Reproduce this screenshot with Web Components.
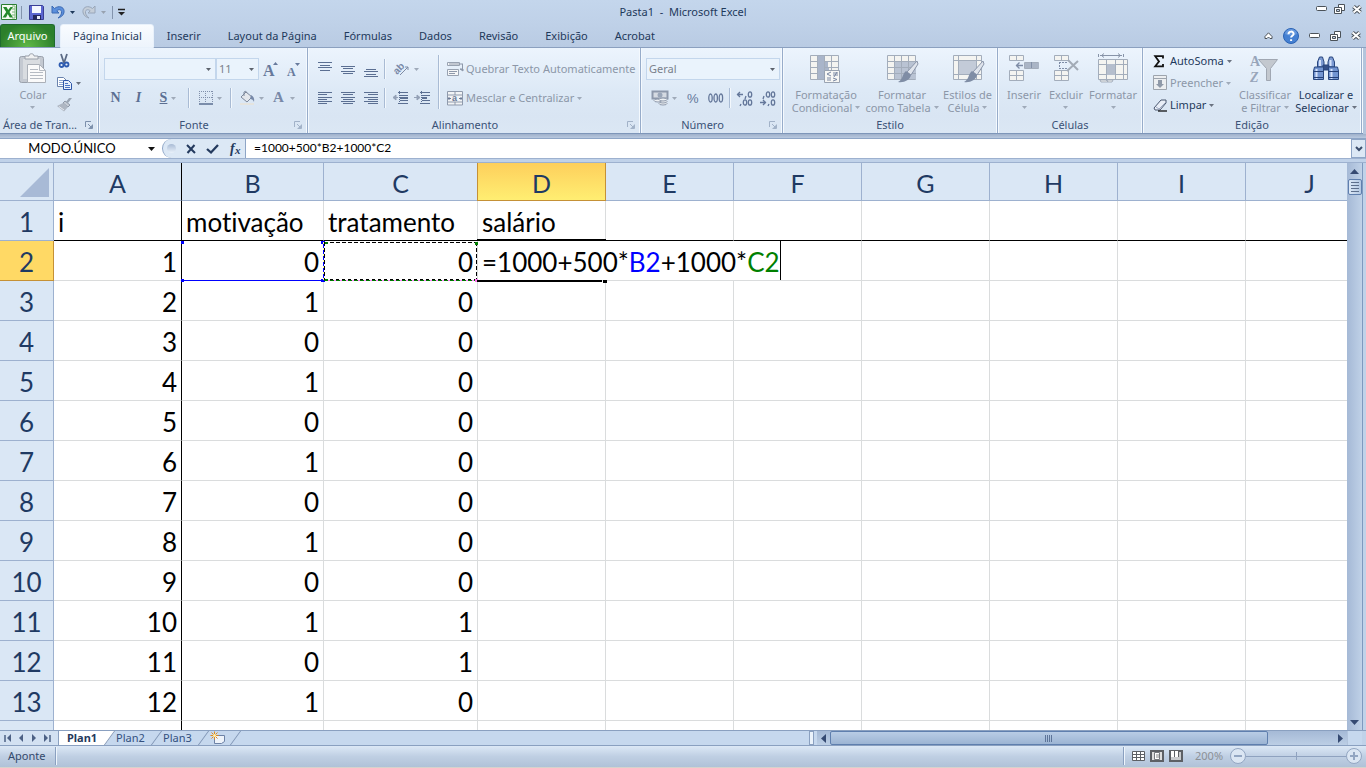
<!DOCTYPE html>
<html lang="pt-BR">
<head>
<meta charset="utf-8">
<title>Pasta1 - Microsoft Excel</title>
<style>
html,body{margin:0;height:100%}
body{font:11px/13px "Noto Sans","Open Sans",sans-serif;color:#1e395b;background:#c0d2e9;overflow:hidden}
</style>
</head>
<body>
<xl-app></xl-app>
<script>
const define = (name, html, setup) => {
  const template = document.createElement('template');
  template.innerHTML = '<style>*{box-sizing:border-box}button,input,select{font:inherit;color:inherit;margin:0;padding:0;border:0;background:none;border-radius:0;outline:0}[hidden]{display:none}</style>' + html;
  customElements.define(name, class extends HTMLElement {
    constructor() {
      super();
      this.attachShadow({mode: 'open'}).append(template.content.cloneNode(true));
    }
    connectedCallback() { if (setup) setup(this, this.shadowRoot); }
  });
};

/* ---------- icons: [width, height, markup] ---------- */
const lines = (ys, xs) => ys.map((y, i) => `<path d="M${xs[i % xs.length][0]} ${y}h${xs[i % xs.length][1]}" stroke="#5b6f92"/>`).join('');
const restore = '<g fill="#fff" stroke="#4b5259"><path d="M4.5.5h6v6h-6z"/><path d="M.5 3.5h7v6h-7z"/><path d="M2.5 5.5h3v2h-3z" fill="#c1d2e8"/></g>';
const cross = '<path d="M1.5 1.5l7 6M8.5 1.5l-7 6" stroke="#4b5259" stroke-width="4"/><path d="M1.5 1.5l7 6M8.5 1.5l-7 6" stroke="#fff" stroke-width="2"/>';
const brush = '<path d="M31 8l-10 11 4 3 7-11z" fill="#dfe4ec" stroke="#8b96aa"/><path d="M20 18l5 4c-1 5-7 8-13 7 5-2 4-8 8-11z" fill="#7f8da5"/>';
const grid = (x, y, c, r, w, h) => {
  let d = `<path d="M${x} ${y}h${c*w}v${r*h}h${-c*w}z" fill="#f4f4f1" stroke="#a3adbb"/>`;
  for (let i = 1; i < c; i++) d += `<path d="M${x+i*w} ${y}v${r*h}" stroke="#a3adbb"/>`;
  for (let i = 1; i < r; i++) d += `<path d="M${x} ${y+i*h}h${c*w}" stroke="#a3adbb"/>`;
  return d;
};
const icons = {
  excel: [16,16,'<path d="M.5.5h15v15H.5z" fill="#f5fbf3" stroke="#2b7d32"/><path d="M11 2h3v12h-3" fill="none" stroke="#7fb77c"/><path d="M11 5h3M11 8h3M11 11h3" stroke="#7fb77c"/><path d="M2 3h3.500l1.700 3L9.500 3H12L8.500 8l3.500 5.500H8.700L6.800 10 5 13.500H1.500L5.200 8z" fill="#24892c"/>'],
  save: [15,15,'<path d="M.5 .5h13l1 1v13H.5z" fill="#5b66d0" stroke="#3a3f96"/><path d="M3 1h9v7H3z" fill="#f4f7ff"/><path d="M4 10h8v5H4z" fill="#24285e"/><path d="M8 11h3v3H8z" fill="#e8ebfa"/>'],
  undo: [14,14,'<path d="M1 1v7h7L5.800 5.800C8 4 10 4.500 10.500 6.500S9.500 11 7 13c4-1 6.500-4 6-7.500S8 0 3.500 3.500z" fill="#5b8fdc" stroke="#3c6ab3" stroke-width="1"/>'],
  redo: [14,14,'<path d="M13 1v7H6l2.200-2.200C6 4 4 4.500 3.500 6.500S4.500 11 7 13C3 12 .5 9 1 5.500S6 0 10.500 3.500z" fill="#c5ced9" stroke="#98a6b9" stroke-width="1"/>'],
  qat: [7,7,'<path d="M0 .5h7" stroke="#222" stroke-width="1.500"/><path d="M0 3h7L3.500 6.500z" fill="#222"/>'],
  tri: [5,3,'<path d="M0 0h5L2.500 3z" fill="currentColor"/>'],
  tri7: [7,4,'<path d="M0 0h7L3.500 4z" fill="#111"/>'],
  min: [11,6,'<rect x=".5" y=".5" width="10" height="4" rx="1" fill="#fff" stroke="#4b5259"/>'],
  restore: [11,10,restore],
  close: [10,9,cross],
  up: [9,7,'<path d="M4.500.8L8 4.500v2H6L4.500 5 3 6.500H1v-2z" fill="#fff" stroke="#4b5259"/>'],
  help: [16,16,'<circle cx="8" cy="8" r="7.500" fill="#4580d2" stroke="#2a62b4"/><path d="M2 6a6 5 0 0 1 12 0q-6 3-12 0" fill="#7aa6e4" opacity=".6"/><path d="M5.500 6.200C5.500 2.800 10.800 2.800 10.600 6c-.1 1.800-2.500 1.800-2.500 3.600M8.100 11.200v1.800" stroke="#fff" stroke-width="2" fill="none"/>'],
  paste: [32,32,'<rect x="2.500" y="3.500" width="24" height="26" rx="2" fill="#c4c9d1" stroke="#9aa1ac"/><path d="M6 6h17v20H6z" fill="#d9dce0"/><path d="M8 6V3h4c0-3 5-3 5 0h4v3z" fill="#f0f1f2" stroke="#989ea8"/><path d="M10.500 11.500h12l6 6v12h-18z" fill="#fafafa" stroke="#abb0b8"/><path d="M22.500 11.500v6h6M13 16.500h8M13 19.500h13M13 22.500h13M13 25.500h13" fill="none" stroke="#b5bac2"/>'],
  cut: [16,14,'<path d="M4 0l3 9M10 0L7 9" stroke="#5c6b85" stroke-width="1.800"/><circle cx="4.500" cy="11" r="2" fill="none" stroke="#2e5bb0" stroke-width="1.800"/><circle cx="9.500" cy="10.500" r="2" fill="none" stroke="#2e5bb0" stroke-width="1.800"/>'],
  copy: [16,13,'<path d="M.5.5h6l3 3v6h-9z" fill="#fff" stroke="#6a83ad"/><path d="M2 3.500h4M2 5.500h4M2 7.500h4" stroke="#8aa5d2"/><path d="M6.500 3.500h5l3 3v6h-8z" fill="#e6effc" stroke="#2f57a8"/><path d="M8 6.500h3M8 8.500h5M8 10.500h5" stroke="#4c75c4"/>'],
  painter: [16,14,'<path d="M15 0l-4 5-2-1 3-4z" fill="#9aa4b2"/><path d="M8 3l5 4-2 2-5-4z" fill="#c6ccd5" stroke="#8f99a8"/><path d="M6 5l5 4-4 4.500L0 8z" fill="#aeb6c2"/><path d="M2 8.500l5 3.500" stroke="#e6eaf0"/>'],
  grow: [15,16,'<text x="0" y="15" font-family="Liberation Serif" font-weight="bold" font-size="16" fill="#687a9c">A</text><path d="M10 4h5l-2.500-3z" fill="#687a9c"/>'],
  shrink: [13,16,'<text x="0" y="15" font-family="Liberation Serif" font-weight="bold" font-size="12" fill="#687a9c">A</text><path d="M8 2h5l-2.500 3z" fill="#687a9c"/>'],
  borders: [14,14,'<path d="M0 .5h14M0 6.500h14M.5 0v12M6.500 0v12M13.500 0v12" stroke="#8190ab" stroke-dasharray="1 1"/><path d="M0 13h14" stroke="#5b6f92" stroke-width="1.500"/>'],
  bucket: [15,14,'<path d="M1 6l5-5 6 5-5 5z" fill="#e4e7ec" stroke="#7d889b"/><path d="M4 5V1q2-2 3 1" fill="none" stroke="#7d889b"/><path d="M11 4q4 2 3 7-1-3-4-3z" fill="#7688a8"/><path d="M0 13h14" stroke="#e5e4df" stroke-width="2"/>'],
  fontcolor: [13,14,'<text x="0" y="11" font-family="Liberation Serif" font-weight="bold" font-size="15" fill="#7889a8">A</text>'],
  atop: [14,15,lines([.5,3.5,5.5,8.5],[[0,14],[2,10]])],
  amid: [14,15,lines([4.5,6.5,9.5,11.5],[[0,14],[2,10]])],
  abot: [14,15,lines([7.5,9.5,12.5,14.5],[[2,10],[0,14]])],
  left: [14,12,lines([.5,2.5,5.5,7.5,9.5,11.5],[[0,14],[0,9]])],
  center: [14,12,lines([.5,2.5,5.5,7.5,9.5,11.5],[[0,14],[2,10]])],
  right: [14,12,lines([.5,2.5,5.5,7.5,9.5,11.5],[[0,14],[4,10]])],
  orient: [16,14,'<text x="0" y="10" transform="rotate(-45 5 8)" font-family="Liberation Sans" font-weight="bold" font-size="10" fill="#7889a8">ab</text><path d="M6 13l8-8M11 5h3v3" fill="none" stroke="#7d8ba5"/>'],
  outdent: [16,14,'<path d="M6 1.500h10M8 4.500h8M8 9.500h8M6 12.500h10" stroke="#5b6f92"/><path d="M8 6h8v2H8z" fill="#5b6f92"/><path d="M7.500 0v14" stroke="#5b6f92" stroke-dasharray="1 1"/><path d="M6 6.500H2M4 4L1 6.500 4 9z" fill="#93a0b6" stroke="#93a0b6"/>'],
  indent: [16,14,'<path d="M6 1.500h10M8 4.500h8M8 9.500h8M6 12.500h10" stroke="#5b6f92"/><path d="M8 6h5v2H8z" fill="#5b6f92"/><path d="M7.500 0v14" stroke="#5b6f92" stroke-dasharray="1 1"/><path d="M0 6.500h4M3 4l3 2.500L3 9z" fill="#93a0b6" stroke="#93a0b6"/>'],
  wrap: [16,16,'<path d="M.5 1.500h12v3H.5zM.5 8.500h11v6H.5z" fill="#f5f6f7" stroke="#98a2b1"/><path d="M2 3h14M2 10.500h8M2 12.500h6" stroke="#8d98aa"/><path d="M15.500 3v6M13 8h3v2z" stroke="#8d98aa" fill="#8d98aa"/>'],
  merge: [16,15,'<path d="M.5.500h15v13.500H.5z" fill="#f2f4f6" stroke="#8f9aac"/><path d="M0 4h16M0 11h16M8 0v4M8 11v3" stroke="#8f9aac"/><path d="M1 7.500h3M12 7.500h3M2 6v3M14 6v3" stroke="#6a7a97"/><text x="5" y="10" font-family="Liberation Sans" font-weight="bold" font-size="9" fill="#6a7a97">a</text>'],
  money: [16,16,'<path d="M.5 1.500h15v7H.5z" fill="#d5dae2" stroke="#8d98ab" stroke-width="2"/><circle cx="8" cy="5" r="2.500" fill="#9aa6b9"/><g fill="#edf0f3" stroke="#8f9aac"><ellipse cx="11" cy="13.500" rx="4" ry="1.500"/><ellipse cx="11" cy="11.500" rx="4" ry="1.500"/><ellipse cx="6" cy="10.500" rx="4" ry="1.500"/><ellipse cx="11" cy="9.500" rx="4" ry="1.500"/></g>'],
  percent: [13,14,'<text x="0" y="12" font-family="Liberation Sans" font-size="13" fill="#64779a">%</text>'],
  thousand: [16,14,'<g fill="none" stroke="#64779a" stroke-width="1.300"><ellipse cx="2.500" cy="7" rx="1.700" ry="4"/><ellipse cx="7.700" cy="7" rx="1.700" ry="4"/><ellipse cx="12.900" cy="7" rx="1.700" ry="4"/></g>'],
  incdec: [16,15,'<g fill="none" stroke="#64779a" stroke-width="1.300"><ellipse cx="13" cy="3.500" rx="1.700" ry="2.700"/><ellipse cx="8" cy="11.500" rx="1.700" ry="2.700"/><ellipse cx="13" cy="11.500" rx="1.700" ry="2.700"/><path d="M9 5l-1 3M4 13l-1 2M0 3.500h6M3 1L.5 3.500 3 6"/></g>'],
  decdec: [16,15,'<g fill="none" stroke="#64779a" stroke-width="1.300"><ellipse cx="8" cy="3.500" rx="1.700" ry="2.700"/><ellipse cx="13" cy="3.500" rx="1.700" ry="2.700"/><ellipse cx="13" cy="11.500" rx="1.700" ry="2.700"/><path d="M4 5L3 8M9 13l-1 2M0 11.500h6M3 9l2.500 2.500L3 14"/></g>'],
  cond: [32,32,grid(.5,2.5,4,4,7,6)+'<path d="M8 3h6v23H8zM15 9h3v5h-3zM15 15h4v5h-4z" fill="#a9b5ca"/><path d="M14.500 17.500h15v12h-15z" fill="#f7f7f5" stroke="#99a3b2"/><path d="M21 19l-4 2 4 2M17 25h4M23 20h5M23 22h5M27 19l-3 5M23 25l4 1.500-4 1.500M17 27h4" fill="none" stroke="#7a88a3"/>'],
  table: [32,32,grid(1.5,2.5,4,4,7,6)+'<path d="M9 9h21v17H9z" fill="#b9c3d3"/><path d="M15.500 9v17M22.500 9v17M9 14.500h21M9 20.500h21" stroke="#a3adbb"/>'+brush],
  styles: [32,32,grid(1.5,2.5,1,1,28,24)+'<path d="M6.500 2v25M24.500 2v25M1 7.500h29M1 21.500h29" stroke="#a3adbb"/><path d="M7 8h17v13H7z" fill="#c3cbd8"/>'+brush],
  insert: [32,32,grid(1.5,2.5,2,1,7,5)+grid(1.5,17.5,2,2,7,5)+grid(16.5,9.5,2,1,7,6)+'<path d="M17 10h14v5H17z" fill="#aab5c6"/><path d="M23.500 9v6" stroke="#8290a8"/><path d="M8 12.500h7M11.500 9.500l-3 3 3 3" fill="none" stroke="#7e8ca6" stroke-width="1.300"/>'],
  remove: [32,32,grid(4.5,2.5,2,1,7,5)+grid(4.5,17.5,2,2,7,5)+'<path d="M9 9.500h9M9 15.500h9M9.500 9v6" stroke="#7e8ca6" stroke-dasharray="2 1"/><path d="M18 7l10 10M28 8L17 18" stroke="#a3abb6" stroke-width="2"/>'],
  format: [32,32,'<path d="M1.500 1v3M26.500 1v3M3 2.500h22M7 .5L4.500 2.500 7 4.500M21 .5l2.500 2-2.500 2" fill="none" stroke="#8793a8"/>'+grid(1.5,6.5,1,1,29,20)+'<path d="M9.500 6v21M18.500 6v21M26.500 6v21M1 11.500h29M1 21.500h29" stroke="#a3adbb"/><path d="M10 11h8v11h-8z" fill="#b5becd"/><path d="M3 27h6l2 2H4zM10 27h6l-1 2h-4z" fill="#f5f5f2" stroke="#a3adbb"/>'],
  sigma: [14,13,'<path d="M10 3.500V1.200H2.200L6 6.500 2.200 11.300H10V9" fill="none" stroke="#111" stroke-width="1.800"/>'],
  fill: [14,16,'<path d="M.5.5h13v14H.5z" fill="#eceef0" stroke="#9da4ad"/><path d="M1 3.500h12" stroke="#9da4ad"/><path d="M5 5h4v4h2l-4 4-4-4h2z" fill="#8f99a8"/>'],
  clear: [14,13,'<path d="M1 9l7-8h5v3l-6 7H2z" fill="#e9eef7" stroke="#49566e"/><path d="M3 8l3 2 6-6" fill="none" stroke="#9eabc4"/><path d="M5 12h9" stroke="#111" stroke-width="1.300"/>'],
  sort: [32,32,'<text x="1" y="13" font-family="Liberation Serif" font-weight="bold" font-size="14" fill="#98a5ba">A</text><text x="1" y="29" font-family="Liberation Serif" font-style="italic" font-weight="bold" font-size="14" fill="#98a5ba">Z</text><path d="M9.500 6.500h19l-7 9v12h-4v-12z" fill="#c3c8cf" stroke="#a0a7b2"/>'],
  find: [32,32,'<g stroke="#29477f"><path d="M9.500 4h3l1.500 5v5H7.500V9zM19.500 4h3l2 5v5H18V9z" fill="#7c9ad2"/><path d="M13 12h6v5h-6z" fill="#344f87"/><path d="M4.500 14h9v12.500h-10V18z" fill="#7395d1"/><path d="M18.500 14h9l1 4v8.500h-10z" fill="#7395d1"/></g><path d="M6.500 16v10M21.500 16v10M10 7v6M20.500 7v6" stroke="#d5e2fa" stroke-width="2"/><path d="M4 24.500h9M19 24.500h9M4 18.500h9M19 18.500h9" stroke="#253f74"/>'],
  launch: [8,8,'<path d="M.5 6V.5H6" fill="none" stroke="#7d90ac"/><path d="M3 3l3 3M7.500 3.500v4h-4" fill="none" stroke="#7d90ac"/><path d="M7 4v3H4z" fill="#7d90ac"/>'],
  cancel: [10,10,'<path d="M1 1l8 8M8.500 1L1.500 9" stroke="#243a5e" stroke-width="2"/>'],
  ok: [13,10,'<path d="M1 5l4 3.500L12 1" fill="none" stroke="#243a5e" stroke-width="2.300"/>'],
  fx: [12,14,'<text x="1" y="11" font-family="Liberation Serif" font-style="italic" font-weight="bold" font-size="14" fill="#243a5e">f</text><text x="6" y="12" font-family="Liberation Serif" font-style="italic" font-weight="bold" font-size="11" fill="#243a5e">x</text>'],
  chev: [8,6,'<path d="M1 1l3 3 3-3" fill="none" stroke="#3b4d6c" stroke-width="2"/>'],
  corner: [29,29,'<path d="M29 0v29H0z" fill="#a8bad6"/>'],
  first: [8,8,'<path d="M1 1v7" stroke="#4d6185" stroke-width="1.500"/><path d="M7 0v8L3 4z" fill="#4d6185"/>'],
  prev: [8,8,'<path d="M6 0v8L2 4z" fill="#4d6185"/>'],
  next: [8,8,'<path d="M2 0v8l4-4z" fill="#4d6185"/>'],
  last: [8,8,'<path d="M1 0v8l4-4z" fill="#4d6185"/><path d="M7 1v7" stroke="#4d6185" stroke-width="1.500"/>'],
  newsheet: [15,13,'<path d="M4.500 4.500h10v6l-3 2h-7z" fill="#eef3fa" stroke="#6d82a6"/><path d="M4.500.5v8M.5 4.500h8M1.500 1.500l6 6M7.500 1.500l-6 6" stroke="#e08a1e"/><circle cx="4.500" cy="4.500" r="1.500" fill="#fff3b0"/>'],
  sup: [9,5,'<path d="M0 5h9L4.500 0z" fill="#354a72"/>'],
  sdown: [9,5,'<path d="M0 0h9L4.500 5z" fill="#354a72"/>'],
  sleft: [5,9,'<path d="M5 0v9L0 4.500z" fill="#354a72"/>'],
  sright: [5,9,'<path d="M0 0v9l5-4.500z" fill="#354a72"/>'],
  vnormal: [13,10,'<path d="M.5.5h12v9H.5zM.5 3.500h12M.5 6.500h12M4.500.5v9M8.500.5v9" fill="#fff" stroke="#5d6065"/>'],
  vpage: [14,12,'<path d="M1 1h12v10H1z" fill="#ddd" stroke="#5d6065" stroke-width="2"/><path d="M4.500 2.500h5v7h-5z" fill="#fff" stroke="#77797d"/><path d="M6 5h3M6 7h3" stroke="#888"/>'],
  vbreak: [14,12,'<path d="M1 1h12v10H1z" fill="#c9cbce" stroke="#5d6065" stroke-width="2"/><path d="M2 1h3v6H2zM6 1h3v6H6z" fill="#fff"/><path d="M5.500 0v7M9.500 0v7" stroke="#5d6065"/>'],
  minus: [16,16,'<circle cx="8" cy="8" r="7.500" fill="#dbe6f3" stroke="#93a6c2"/><path d="M4 8h8" stroke="#93a6c2" stroke-width="2"/>'],
  plus: [16,16,'<circle cx="8" cy="8" r="7.500" fill="#dbe6f3" stroke="#93a6c2"/><path d="M4 8h8M8 4v8" stroke="#93a6c2" stroke-width="2"/>']
};
define('xl-icon', '<style>:host{display:block;flex:none}svg{display:block;overflow:visible}</style><span id="i"></span>', (el, root) => {
  const [w, h, body] = icons[el.getAttribute('name')];
  root.getElementById('i').innerHTML = `<svg width="${w}" height="${h}" viewBox="0 0 ${w} ${h}" aria-hidden="true">${body}</svg>`;
});

/* ---------- ribbon tool: small (icon + text) or big (icon over two lines) ---------- */
define('xl-tool', `<style>
:host{display:block;flex:none}
button{display:flex;align-items:center;justify-content:center;gap:4px;width:100%;height:22px;white-space:nowrap}
.txt{padding-bottom:2px}
:host([wide]) button{justify-content:flex-start;gap:3px}
:host([big]) button{flex-direction:column;justify-content:flex-start;gap:3px;height:66px;padding-top:3px}
:host([off]) button{color:#8c97a8}
.l{display:block;text-align:center}
.l2{display:flex;align-items:center;justify-content:center;gap:3px;height:13px}
xl-icon.t{color:#6a7280}
:host([off]) xl-icon.t{color:#9faab9}
</style><button type="button"></button>`, (el, root) => {
  const a = n => el.getAttribute(n) || '';
  const arrow = el.hasAttribute('arrow') ? '<xl-icon class="t" name="tri"></xl-icon>' : '';
  const icon = a('icon') ? `<xl-icon name="${a('icon')}"></xl-icon>` : '<slot></slot>';
  const b = root.querySelector('button');
  if (!a('label')) b.setAttribute('aria-label', a('tip') || a('icon'));
  b.innerHTML = el.hasAttribute('big')
    ? `${icon}<span><span class="l">${a('label')}</span><span class="l2">${a('line2')}${arrow}</span></span>`
    : `${icon}${a('label') ? `<span class="txt">${a('label')}</span>` : ''}${arrow}`;
});

define('xl-group', `<style>
:host{display:flex;flex-direction:column;flex:none;height:85px;padding-top:2px;border-right:1px solid #97acca;box-shadow:inset -1px 0 #f4f9fe,1px 0 #f4f9fe}
.body{display:flex;height:66px}
footer{display:flex;align-items:center;height:17px;color:#3b5277}
footer span{flex:1;text-align:center;white-space:nowrap}
button{width:18px;height:14px;display:grid;place-items:center}
:host([launch=off]) button{opacity:.6}
</style><div class="body"><slot></slot></div><footer><span id="t"></span><button type="button" aria-label="Opções"><xl-icon name="launch"></xl-icon></button></footer>`, (el, root) => {
  root.getElementById('t').textContent = el.getAttribute('label');
  root.querySelector('button').hidden = !el.hasAttribute('launch');
});

define('xl-combo', `<style>
:host{display:block;position:relative}
select{appearance:none;width:100%;height:22px;padding:0 2px 1px;border:1px solid #c3d6ec;background:#eaf3fc;color:#7a818b;display:block}
xl-icon{position:absolute;right:5px;top:10px;color:#5c626c;pointer-events:none}
</style><select><option></option></select><xl-icon name="tri"></xl-icon>`, (el, root) => {
  root.querySelector('option').textContent = el.getAttribute('value');
  root.querySelector('select').setAttribute('aria-label', el.getAttribute('label'));
});

define('xl-titlebar', `<style>
:host{display:grid;grid-template-columns:1fr auto 1fr;align-items:center;height:24px;background:linear-gradient(#c4d6ec,#bfd1e8)}
div{display:flex;align-items:center}
button{display:grid;place-items:center}
.quick{padding-left:1px;height:22px}
.quick button{margin-left:7px}
.quick .drop{margin-left:5px}
i{width:1px;height:13px;background:#8394ad;margin-left:4px}
.drop + i{margin-left:6px}
.title{padding-bottom:2px}
.win{justify-content:flex-end;gap:7px;padding:0 4px 6px 0}
xl-icon.d{color:#98a2b0}
</style>
<div class="quick"><xl-icon name="excel"></xl-icon><i></i>
<button type="button" aria-label="Salvar"><xl-icon name="save"></xl-icon></button>
<button type="button" aria-label="Desfazer"><xl-icon name="undo"></xl-icon></button><button class="drop" type="button" aria-label="Lista desfazer"><xl-icon name="tri"></xl-icon></button>
<button type="button" aria-label="Refazer"><xl-icon name="redo"></xl-icon></button><button class="drop" type="button" aria-label="Lista refazer"><xl-icon class="d" name="tri"></xl-icon></button><i></i><button class="drop" type="button" aria-label="Personalizar"><xl-icon name="qat"></xl-icon></button></div>
<span class="title">Pasta1 &nbsp;-&nbsp; Microsoft Excel</span>
<div class="win"><button type="button" aria-label="Minimizar"><xl-icon name="min"></xl-icon></button><button type="button" aria-label="Restaurar"><xl-icon name="restore"></xl-icon></button><button type="button" aria-label="Fechar"><xl-icon name="close"></xl-icon></button></div>`);

define('xl-tabs', `<style>
:host{display:flex;height:24px;background:linear-gradient(#bfd1e8,#b9cbe3);border-bottom:1px solid #8ba0bf}
nav{display:flex;flex:1}
a{display:block;padding:5px 14px 0 13px;height:23px;color:#1e395b;text-decoration:none;white-space:nowrap}
.file{width:55px;margin:0 5px 0 0;padding:5px 0 0;text-align:center;color:#fff;background:radial-gradient(ellipse at 50% 100%,#5fb846,#2c7f2b 75%);border:1px solid #1f6b2d;border-bottom:0;border-radius:3px 3px 0 0;line-height:11px}
.on{background:linear-gradient(#f9fcff,#edf4fc);border:1px solid #e8f1fb;border-radius:3px 3px 0 0;height:24px;margin-bottom:-1px;line-height:11px;padding:5px 11px 0 12px}
div{display:flex;align-items:center;gap:10px;padding-right:5px}
button{display:grid;place-items:center}
</style><nav><a class="file" href="#arquivo">Arquivo</a><a class="on" href="#inicio">Página Inicial</a><a href="#inserir">Inserir</a><a href="#layout">Layout da Página</a><a href="#formulas">Fórmulas</a><a href="#dados">Dados</a><a href="#revisao">Revisão</a><a href="#exibicao">Exibição</a><a href="#acrobat">Acrobat</a></nav>
<div><button type="button" aria-label="Minimizar faixa"><xl-icon name="up"></xl-icon></button><button type="button" aria-label="Ajuda"><xl-icon name="help"></xl-icon></button><button type="button" aria-label="Minimizar pasta"><xl-icon name="min"></xl-icon></button><button type="button" aria-label="Restaurar pasta"><xl-icon name="restore"></xl-icon></button><button type="button" aria-label="Fechar pasta"><xl-icon name="close"></xl-icon></button></div>`);

define('xl-ribbon', `<style>
:host{display:block;background:#b4c5dc}
.bar{display:flex;height:86px;margin-right:3px;background:linear-gradient(#ecf4fd,#dde9f6 50%,#d9e5f3 80%,#dbe7f4);border-bottom:1px solid #7e96b9}
.strip{height:4px;background:linear-gradient(#9fb1cb,#b9c9df)}
.col{display:flex;flex-direction:column}
.row{display:flex;align-items:center;height:22px}
.two{padding-top:8px;gap:7px;display:flex;flex-direction:column}
b,em,u{font:bold 14px/14px "Liberation Serif",serif;color:#5b6f92}
em{font-style:italic}
hr{border:0;width:2px;height:20px;margin:0 2px;background:linear-gradient(90deg,#a9bbd4 50%,#f3f8fd 50%)}
hr.tall{height:54px;margin:5px 7px 0 5px}
.w22{width:22px}.w23{width:23px}.w28{width:28px}.w36{width:36px}
</style>
<div class="bar">
<xl-group label="Área de Tran..." launch style="width:99px">
 <xl-tool big off arrow icon="paste" label="Colar" style="width:38px;margin-left:14px"></xl-tool>
 <div class="col" style="margin-left:5px"><xl-tool wide icon="cut" tip="Recortar"></xl-tool><xl-tool wide arrow icon="copy" tip="Copiar"></xl-tool><xl-tool wide icon="painter" tip="Pincel"></xl-tool></div>
</xl-group>
<xl-group label="Fonte" launch="off" style="width:209px">
 <div class="two" style="padding-left:5px">
  <div class="row"><xl-combo label="Fonte" value="" style="width:112px"></xl-combo><xl-combo label="Tamanho" value="11" style="width:43px"></xl-combo><xl-tool class="w23" icon="grow" tip="Aumentar"></xl-tool><xl-tool class="w23" icon="shrink" tip="Diminuir"></xl-tool></div>
  <div class="row"><xl-tool class="w23" tip="Negrito"><b>N</b></xl-tool><xl-tool class="w23" tip="Itálico"><em>I</em></xl-tool><xl-tool class="w36" off arrow tip="Sublinhado"><u>S</u></xl-tool><hr><xl-tool class="w36" off arrow icon="borders"></xl-tool><hr><xl-tool class="w36" off arrow icon="bucket"></xl-tool><xl-tool class="w28" off arrow icon="fontcolor"></xl-tool></div>
 </div>
</xl-group>
<xl-group label="Alinhamento" launch="off" style="width:333px">
 <div class="two" style="padding-left:5px">
  <div class="row"><xl-tool class="w23" icon="atop"></xl-tool><xl-tool class="w23" icon="amid"></xl-tool><xl-tool class="w23" icon="abot"></xl-tool><hr><xl-tool class="w36" off arrow icon="orient"></xl-tool></div>
  <div class="row"><xl-tool class="w23" icon="left"></xl-tool><xl-tool class="w23" icon="center"></xl-tool><xl-tool class="w23" icon="right"></xl-tool><hr><xl-tool class="w23" icon="outdent"></xl-tool><xl-tool class="w22" icon="indent"></xl-tool></div>
 </div>
 <hr class="tall">
 <div class="two"><xl-tool wide off icon="wrap" label="Quebrar Texto Automaticamente"></xl-tool><xl-tool wide off arrow icon="merge" label="Mesclar e Centralizar"></xl-tool></div>
</xl-group>
<xl-group label="Número" launch="off" style="width:142px">
 <div class="two" style="padding-left:5px">
  <xl-combo label="Formato" value="Geral" style="width:134px"></xl-combo>
  <div class="row"><xl-tool class="w36" off arrow icon="money"></xl-tool><xl-tool class="w22" icon="percent"></xl-tool><xl-tool class="w23" icon="thousand"></xl-tool><hr><xl-tool class="w23" icon="incdec"></xl-tool><xl-tool class="w23" icon="decdec"></xl-tool></div>
 </div>
</xl-group>
<xl-group label="Estilo" style="width:215px">
 <xl-tool big off arrow icon="cond" label="Formatação" line2="Condicional" style="width:72px;margin-left:7px"></xl-tool><xl-tool big off arrow icon="table" label="Formatar" line2="como Tabela" style="width:76px;margin-left:2px"></xl-tool><xl-tool big off arrow icon="styles" label="Estilos de" line2="Célula" style="width:55px"></xl-tool>
</xl-group>
<xl-group label="Células" style="width:145px">
 <xl-tool big off arrow icon="insert" label="Inserir" style="width:42px;margin-left:5px"></xl-tool><xl-tool big off arrow icon="remove" label="Excluir" style="width:42px"></xl-tool><xl-tool big off arrow icon="format" label="Formatar" style="width:52px"></xl-tool>
</xl-group>
<xl-group label="Edição" style="width:219px">
 <div class="col" style="width:84px;margin-left:10px"><xl-tool wide arrow icon="sigma" label="AutoSoma"></xl-tool><xl-tool wide off arrow icon="fill" label="Preencher"></xl-tool><xl-tool wide arrow icon="clear" label="Limpar"></xl-tool></div>
 <xl-tool big off arrow icon="sort" label="Classificar" line2="e Filtrar" style="width:56px"></xl-tool><xl-tool big arrow icon="find" label="Localizar e" line2="Selecionar" style="width:66px"></xl-tool>
</xl-group>
</div><div class="strip"></div>`);

define('xl-formula-bar', `<style>
:host{display:flex;height:21px;background:#fff;border-top:1px solid #8ea5c6;border-bottom:1px solid #9db1cf;font:13px/16px Lato,sans-serif;color:#000}
input{padding-bottom:2px}
.name{width:144px;text-align:center}
.tools{display:flex;align-items:center;width:84px;height:19px;border-left:1px solid #8ea5c6;border-right:1px solid #8ea5c6;border-radius:10px 0 0 10px;background:#dce8f5;gap:10px;padding-left:4px}
.knob{width:9px;height:9px;border-radius:5px;background:linear-gradient(#a9bbd5,#e9f1fa)}
.f{flex:1;min-width:0;padding-left:8px;font-size:12px}
button{display:grid;place-items:center}
.drop{width:14px;margin-right:4px}
.more{width:15px;background:#dce8f5;border:1px solid #8ea5c6}
</style><input class="name" aria-label="Caixa de nome" value="MODO.ÚNICO"><button class="drop" type="button" aria-label="Nomes"><xl-icon name="tri7"></xl-icon></button>
<div class="tools"><span class="knob"></span><button type="button" aria-label="Cancelar"><xl-icon name="cancel"></xl-icon></button><button type="button" aria-label="Inserir"><xl-icon name="ok"></xl-icon></button><button type="button" aria-label="Função"><xl-icon name="fx"></xl-icon></button></div>
<input class="f" aria-label="Fórmula" value="=1000+500*B2+1000*C2"><button class="more" type="button" aria-label="Expandir"><xl-icon name="chev"></xl-icon></button>`);

define('xl-grid', `<style>
:host{display:block;overflow:hidden;background:#fff;font:26px/30px Lato,sans-serif;font-variant-ligatures:none;color:#000;min-width:0}
table{table-layout:fixed;width:1374px;border-collapse:separate;border-spacing:0}
th,td{height:40px;padding:2px 4px 0;border:solid #dadcdd;border-width:0 1px 1px 0;font-weight:400;text-align:right;white-space:nowrap;position:relative}
th{background:#dae7f5;color:#1f3a63;text-align:center;border-color:#9db1cf}
thead th{height:38px;font-size:25px}
thead th:first-child{padding:0}
thead xl-icon{margin:1px 0 0 20px}
td:nth-child(2),th:nth-child(2){border-right-color:#000}
tr.head td{border-bottom-color:#000;text-align:left}
thead th.sel{background:linear-gradient(#fdcf5c,#ffee72);border-color:#c59136;box-shadow:-1px 0 #c59136}
tbody th.sel{background:#ffd965;border-color:#c59136}
svg{position:absolute;left:-2px;top:-1px;width:calc(100% + 4px);height:43px;overflow:visible;z-index:1}
.edit{position:absolute;z-index:2;left:0;top:0;height:39px;padding:6px 0 0 4px;background:#fff;border-right:1px solid #000;line-height:30px;outline:0}
.b{color:#00f}.c{color:#008000}
</style><table><colgroup><col style="width:54px"><col style="width:128px"><col style="width:142px"><col style="width:154px"><col span="7" style="width:128px"></colgroup><thead><tr></tr></thead><tbody></tbody></table>`, (el, root) => {
  const cols = [...'ABCDEFGHIJ'];
  root.querySelector('thead tr').innerHTML = '<th aria-label="Selecionar tudo"><xl-icon name="corner"></xl-icon></th>' + cols.map(c => `<th scope="col"${c === 'D' ? ' class="sel"' : ''}>${c}</th>`).join('');
  const rows = [['i','motivação','tratamento','salário']];
  const treated = [0,0,0,0,0,0,0,0,0,1,1,0];
  treated.forEach((t, i) => rows.push([i + 1, i % 2, t]));
  rows.push([]);
  root.querySelector('tbody').innerHTML = rows.map((r, y) => {
    const tds = cols.map((c, x) => {
      let extra = '';
      if (y === 1 && c === 'B') extra = '<svg aria-hidden="true"><path d="M2 40.500h142" stroke="#00f"/><path d="M1 1h3v3H1zM141 1h4v3h-4zM1 39h3v3H1zM141 39h4v3h-4z" fill="#00f"/></svg>';
      if (y === 1 && c === 'C') extra = '<svg aria-hidden="true"><path d="M2 2.500h153" stroke="#000" stroke-dasharray="4 2"/><path d="M1.500 2v38" stroke="#00f"/><path d="M1.500 2v38" stroke="#ffffa0" stroke-dasharray="2 4"/><path d="M2.500 2v38M154.500 2v38" stroke="#000" stroke-dasharray="4 2"/><path d="M2 39.500h153" stroke="#000" stroke-dasharray="3 3"/><path d="M2 40.500h153" stroke="#ff80ff"/><path d="M2 40.500h153" stroke="#070" stroke-dasharray="4 2"/><path d="M3 2h3v2H3zM153 2h3v3h-3zM3 39h3v2H3z" fill="#008000"/><path d="M153 39h3v3h-3z" fill="#f7e"/></svg>';
      if (y === 1 && c === 'D') extra = '<svg aria-hidden="true"><path d="M1 0h129M1 41h125" stroke="#000" stroke-width="2"/><path d="M127 39h4v4h-4z"/></svg><div class="edit" contenteditable="true" role="textbox" aria-label="D2" spellcheck="false">=1000+500*<span class="b">B2</span>+1000*<span class="c">C2</span></div>';
      return `<td>${r[x] ?? ''}${extra}</td>`;
    }).join('');
    return `<tr${y === 0 ? ' class="head"' : ''}><th scope="row"${y === 1 ? ' class="sel"' : ''}>${y < 13 ? y + 1 : ''}</th>${tds}</tr>`;
  }).join('');
});

define('xl-vscroll', `<style>
:host{display:flex;flex-direction:column;align-items:center;width:19px;background:linear-gradient(90deg,#a5b9d6,#bccee5 13px,#c2d3e9 15px,#7f99bf 15px,#7f99bf 16px,#c0d2e9 16px);padding-right:4px}
button{display:grid;place-items:center;height:16px;width:15px}
.thumb{width:14px;height:16px;border:1px solid #5f7fae;border-radius:2px;background:repeating-linear-gradient(#5d6f8c 0 1px,transparent 1px 3px) center/8px 10px no-repeat,linear-gradient(90deg,#dce8f6,#b3c8e3)}
.gap{flex:1}
</style><button type="button" aria-label="Para cima"><xl-icon name="sup"></xl-icon></button><div class="thumb"></div><div class="gap"></div><button type="button" aria-label="Para baixo"><xl-icon name="sdown"></xl-icon></button>`);

define('xl-sheet-tabs', `<style>
:host{display:flex;height:16px;background:#c6d8ee;border-top:1px solid #8aa0c0;border-bottom:1px solid #8aa0c0}
button{display:grid;place-items:center;height:14px}
.nav{display:flex;width:59px;gap:5px;padding-left:4px;background:#d3e1f2;border-right:1px solid #8aa0c0}
.sheets{display:flex;flex:1;min-width:0}
.sheets a{position:relative;isolation:isolate;padding-left:6px;width:47px;height:14px;line-height:13px;color:#33507e;text-decoration:none}
.sheets a::after{content:"";position:absolute;z-index:-1;right:0;top:0;width:20px;height:14px;border-right:1px solid #7e93b3;transform:skewX(-36deg)}
.sheets a.on{width:51px;padding-left:8px;background:linear-gradient(#fff,#fff) 0 0/36px 14px no-repeat;font-weight:700;color:#26395c}
.sheets a.on::after{background:#fff}
.sheets .new{width:32px}
.split{width:5px;background:#eaf2fb;border:1px solid #8aa0c0;margin-right:3px}
.h{display:flex;width:530px;background:linear-gradient(#a5b9d6,#bccee5)}
.h button{width:14px}
.h button:first-child{width:13px}
.thumb{flex:0 0 438px;border:1px solid #5f7fae;border-radius:2px;background:repeating-linear-gradient(90deg,#5d7499 0 1px,transparent 1px 2px) center/8px 7px no-repeat,linear-gradient(#b8cce5,#9cb4d3)}
.rest{flex:1}
.corner{width:19px;border-left:1px solid #b2c4dc;border-right:4px solid #c0d2e9;background:#c6d8ee}
</style><div class="nav"><button type="button" aria-label="Primeira"><xl-icon name="first"></xl-icon></button><button type="button" aria-label="Anterior"><xl-icon name="prev"></xl-icon></button><button type="button" aria-label="Próxima"><xl-icon name="next"></xl-icon></button><button type="button" aria-label="Última"><xl-icon name="last"></xl-icon></button></div>
<div class="sheets"><a class="on" href="#plan1">Plan1</a><a href="#plan2">Plan2</a><a href="#plan3">Plan3</a><a class="new" href="#nova" aria-label="Inserir planilha"><xl-icon name="newsheet"></xl-icon></a></div>
<div class="split"></div><div class="h"><button type="button" aria-label="Esquerda"><xl-icon name="sleft"></xl-icon></button><div class="thumb"></div><div class="rest"></div><button type="button" aria-label="Direita"><xl-icon name="sright"></xl-icon></button></div><div class="corner"></div>`);

define('xl-status', `<style>
:host{display:flex;align-items:center;height:22px;background:linear-gradient(#dce8f6,#bfcfe3 50%,#b0c2d8);border-bottom:1px solid #d6d3cc;color:#33496c;padding:0 4px 1px 8px}
i{width:2px;height:18px;background:linear-gradient(90deg,#8aa0c0 50%,#eef5fc 50%)}
.s{width:47px;padding-bottom:1px}.gap{flex:1}
button{display:grid;place-items:center}
.views{display:flex;gap:5px;padding-left:7px;width:70px}
output{width:35px;padding-bottom:1px;color:#8c9096}
input{appearance:none;width:100px;height:16px;background:linear-gradient(#8fa2bf,#8fa2bf) center/1px 8px no-repeat,linear-gradient(#8fa2bf,#8fa2bf) center/100% 1px no-repeat}
input::-webkit-slider-thumb{appearance:none;width:1px;height:1px}
</style><span class="s">Aponte</span><i></i><span class="gap"></span><i></i><div class="views"><button type="button" aria-label="Normal"><xl-icon name="vnormal"></xl-icon></button><button type="button" aria-label="Layout da página"><xl-icon name="vpage"></xl-icon></button><button type="button" aria-label="Quebra de página"><xl-icon name="vbreak"></xl-icon></button></div><output>200%</output><button type="button" aria-label="Reduzir"><xl-icon name="minus"></xl-icon></button><input type="range" aria-label="Zoom" min="10" max="400" value="200"><button type="button" aria-label="Ampliar"><xl-icon name="plus"></xl-icon></button>`);

define('xl-app', `<style>
:host{display:flex;flex-direction:column;height:100vh}
main{display:flex;flex:1;min-height:0;margin-top:3px;border-top:1px solid #9db1cf}
xl-grid{flex:1}
</style><xl-titlebar></xl-titlebar><xl-tabs></xl-tabs><xl-ribbon></xl-ribbon><xl-formula-bar></xl-formula-bar><main><xl-grid></xl-grid><xl-vscroll></xl-vscroll></main><xl-sheet-tabs></xl-sheet-tabs><xl-status></xl-status>`);
</script>
</body>
</html>
